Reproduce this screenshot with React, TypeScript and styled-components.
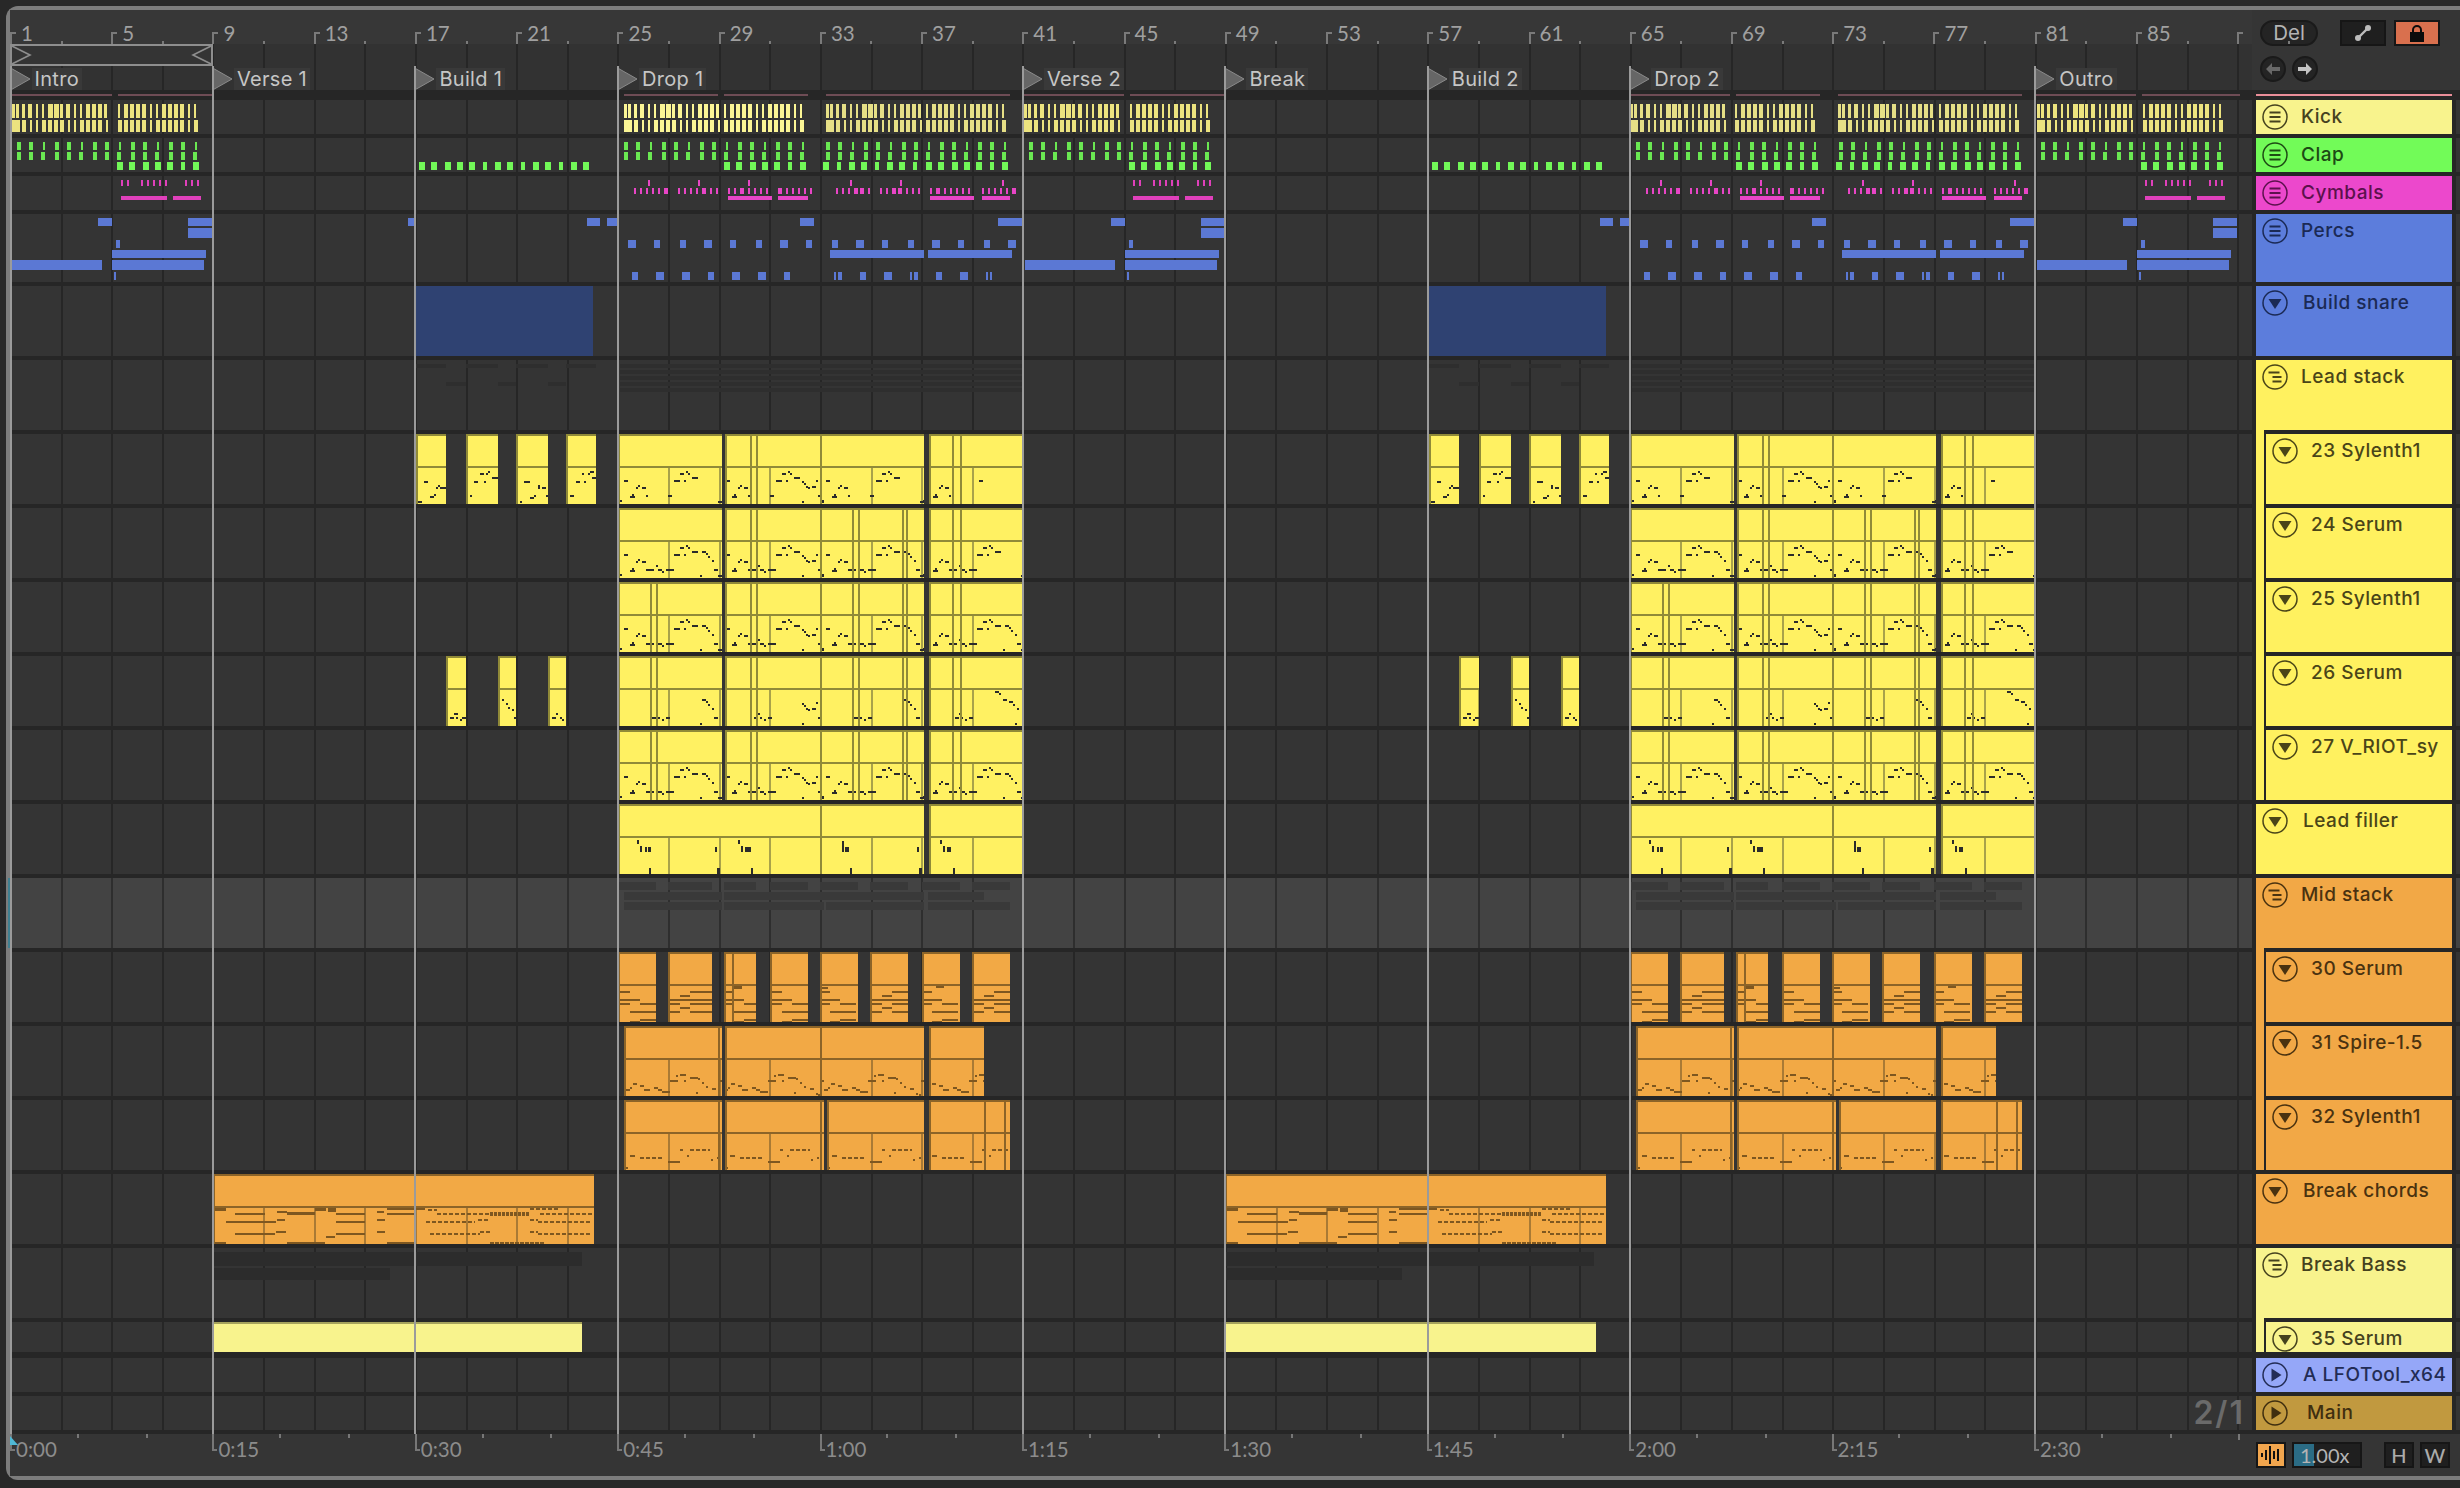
import React from 'react';
import styled, { createGlobalStyle } from 'styled-components';

type Tone = 'yellow' | 'orange';
type Note = [number, number, number, number?];
type Box = [number, number, number, number, string];

const SEAM = '#262626';
const LANE = '#343434';
const barX = (bar: number) => 10.5 + (bar - 1) * 25.31;
const BAR4 = 101.24;
const DROP2 = 1012;
const BUILD2 = 1013;

const tones = {
  yellow: { bg: '#fff162', edge: '#908a38', grid: '#a9a24a', note: '#2b2b2b' },
  orange: { bg: '#f2a945', edge: '#8c6428', grid: '#a97a35', note: '#7e5720' },
};

const GlobalStyle = createGlobalStyle`
  html, body { margin: 0; padding: 0; background: #282828; }
  * { box-sizing: border-box; }
`;

const Page = styled.div`
  width: 2460px;
  height: 1488px;
  padding: 6px 0 0 6px;
  background: #282828;
  overflow: hidden;
`;

const Frame = styled.div`
  position: relative;
  width: 2454px;
  height: 1474px;
  border: 4px solid #7c7c7c;
  border-right: 0;
  border-radius: 12px 0 0 12px;
  background: #353535;
  display: flex;
  flex-direction: column;
  font-family: 'Inter', 'Liberation Sans', sans-serif;
`;

const TopArea = styled.div`
  display: flex;
  height: 80px;
`;

const TopLeft = styled.div`
  width: 2242px;
  display: flex;
  flex-direction: column;
`;

const Ruler = styled.div`
  display: flex;
  height: 34px;
  background: #373737;
`;

const RulerCell = styled.div`
  position: relative;
  flex: 0 0 ${BAR4}px;
  height: 34px;
  padding-left: 11px;
  font-family: 'Lato', 'Liberation Sans', sans-serif;
  font-size: 20.5px;
  line-height: 46px;
  color: #a0a0a0;

  &::before {
    content: '';
    position: absolute;
    left: 0;
    top: 22px;
    width: 4px;
    height: 12px;
    border-left: 2px solid #7a7a7a;
    border-top: 2px solid #7a7a7a;
  }

  &::after {
    content: '';
    position: absolute;
    left: 50%;
    top: 31px;
    width: 2px;
    height: 3px;
    background: #7a7a7a;
  }
`;

const gridLines = (line: string) => `repeating-linear-gradient(90deg, ${line} 0, ${line} 2px, transparent 2px, transparent 50.62px)`;

const LoopLane = styled.div`
  position: relative;
  height: 22px;
  background-color: #323232;
  background-image: ${gridLines(SEAM)};
`;

const LoopBrace = styled.div`
  position: absolute;
  left: 0;
  top: 0;
  width: 203px;
  height: 22px;
  background: #343434;
  border: 2px solid #8e8e8e;
  display: flex;
  justify-content: space-between;
`;

const LocatorLane = styled.div`
  position: relative;
  height: 24px;
  background-color: #323232;
  background-image: ${gridLines(SEAM)};
`;

const Locator = styled.div`
  position: absolute;
  top: 2px;
  display: flex;
  height: 22px;
  align-items: center;
`;

const LocatorName = styled.span`
  margin-left: 1px;
  padding: 0 3px;
  background: #393939;
  color: #c6c6c6;
  font-size: 20px;
  font-weight: 400;
  letter-spacing: 0.3px;
  line-height: 22px;
  white-space: nowrap;
`;

const Controls = styled.div`
  flex: 1;
  padding: 10px 0 0 8px;
  display: flex;
  flex-direction: column;
  gap: 10px;
`;

const ControlRow = styled.div`
  display: flex;
  align-items: center;
  gap: 6px;
`;

const DelButton = styled.div`
  width: 58px;
  height: 26px;
  margin-right: 16px;
  border-radius: 13px;
  background: #242424;
  border: 2px solid #1a1a1a;
  color: #b4b4b4;
  font-size: 20.5px;
  line-height: 22px;
  text-align: center;
`;

const SquareButton = styled.div<{ $bg: string }>`
  width: 46px;
  height: 26px;
  margin-right: 2px;
  background: ${p => p.$bg};
  border: 2px solid #161616;
  display: flex;
  align-items: center;
  justify-content: center;
`;

const RoundButton = styled.div`
  width: 26px;
  height: 26px;
  border-radius: 50%;
  background: #242424;
  border: 2px solid #1a1a1a;
  display: flex;
  align-items: center;
  justify-content: center;
`;

const Band = styled.div`
  display: flex;
  height: 10px;
  background: ${SEAM};
`;

const BandLane = styled.div`
  position: relative;
  width: 2242px;
`;

const BandStrip = styled.div`
  position: absolute;
  top: 4px;
  height: 2px;
  background: #6e4c55;
`;

const BandHeader = styled.div`
  width: 196px;
  height: 2px;
  margin: 4px 0 0 4px;
  background: #e98d98;
`;

const TrackList = styled.div`
  display: flex;
  flex-direction: column;
  gap: 4px;
  padding-bottom: 4px;
  background: ${SEAM};
`;

const TrackRow = styled.div<{ $height: number; $gapAfter?: boolean }>`
  display: flex;
  gap: 4px;
  height: ${p => p.$height}px;
  margin-bottom: ${p => (p.$gapAfter ? 2 : 0)}px;
`;

const Lane = styled.div<{ $group?: boolean }>`
  position: relative;
  flex: 0 0 2242px;
  overflow: ${p => (p.$group ? 'visible' : 'hidden')};
  background-color: ${p => (p.$group ? '#434343' : LANE)};
  background-image: ${p => gridLines(p.$group ? '#2e2e2e' : SEAM)};

  ${p => p.$group && `
    &::before {
      content: '';
      position: absolute;
      left: -2px;
      top: 0;
      bottom: 0;
      width: 2px;
      background: #3f7f90;
    }
  `}
`;

const LaneTail = styled.div<{ $group?: boolean }>`
  flex: 1;
  background: ${p => (p.$group ? '#434343' : LANE)};
`;

const LaneNotes = styled.svg`
  position: absolute;
  left: 0;
  top: 0;
  display: block;
`;

const ClipBox = styled.div<{ $tone: Tone }>`
  position: absolute;
  top: 0;
  bottom: 0;
  overflow: hidden;
  background: ${p => tones[p.$tone].bg};
  border-left: 2px solid ${p => tones[p.$tone].edge};
  border-top: 2px solid ${p => tones[p.$tone].edge};
`;

const ClipHead = styled.div<{ $tone: Tone }>`
  height: 32px;
  border-bottom: 2px solid ${p => tones[p.$tone].edge};
`;

const ClipBody = styled.svg`
  display: block;
`;

const ClipLine = styled.div<{ $tone: Tone }>`
  position: absolute;
  top: 0;
  bottom: 0;
  width: 2px;
  background: ${p => tones[p.$tone].edge};
`;

const SnareClip = styled.div`
  position: absolute;
  top: 0;
  bottom: 0;
  background: #2f4272;
`;

const BassClip = styled.div`
  position: absolute;
  top: 0;
  bottom: 0;
  background: #f8f38d;
  border-top: 2px solid #a5a25c;
`;

const LocatorLayer = styled.div`
  position: absolute;
  left: 0;
  top: 56px;
  height: 1368px;
  width: 2242px;
  pointer-events: none;
`;

const LocatorLine = styled.div`
  position: absolute;
  top: 0;
  bottom: 0;
  width: 2px;
  background: #9b9b9b;
`;

const Header = styled.div<{ $bg: string; $ink: string; $nested?: boolean; $parent?: string }>`
  position: relative;
  flex: 0 0 196px;
  min-width: 0;
  display: flex;
  align-items: flex-start;
  padding: 4px 0 0 ${p => (p.$nested ? 16 : 6)}px;
  background: ${p => p.$bg};
  color: ${p => p.$ink};

  ${p => p.$nested && `
    &::before {
      content: '';
      position: absolute;
      left: 0;
      top: -4px;
      bottom: 0;
      width: 8px;
      background: ${p.$parent};
    }
    &::after {
      content: '';
      position: absolute;
      left: 8px;
      top: -4px;
      bottom: 0;
      width: 2px;
      background: ${SEAM};
    }
  `}
`;

const HeaderIcon = styled.svg`
  flex: 0 0 26px;
  position: relative;
  z-index: 1;
`;

const HeaderName = styled.div<{ $indent: number }>`
  margin-left: ${p => p.$indent}px;
  flex: 1;
  min-width: 0;
  overflow: hidden;
  white-space: nowrap;
  font-size: 19px;
  font-weight: 500;
  letter-spacing: 0.5px;
  line-height: 26px;
`;

const Footer = styled.div`
  display: flex;
  height: 42px;
  background: #353535;
`;

const TimeRuler = styled.div`
  position: relative;
  display: flex;
  width: 2242px;
  overflow: hidden;
`;

const TimeCell = styled.div<{ $plain?: boolean }>`
  position: relative;
  flex: 0 0 202.4px;
  padding-left: 6px;
  font-family: 'Lato', 'Liberation Sans', sans-serif;
  font-size: 20.5px;
  line-height: 30px;
  color: #8c8c8c;

  &::before {
    content: '';
    position: absolute;
    left: ${p => (p.$plain ? 2 : 0)}px;
    top: 0;
    width: 3px;
    height: ${p => (p.$plain ? 6 : 15)}px;
    border-left: 2px solid #777;
    border-bottom: ${p => (p.$plain ? 0 : 2)}px solid #777;
  }
`;

const TimeTick = styled.span<{ $at: number }>`
  position: absolute;
  top: 0;
  left: ${p => p.$at}%;
  width: 2px;
  height: 4px;
  background: #777;
`;

const PlayMark = styled.svg`
  position: absolute;
  left: 0;
  top: 2px;
  z-index: 1;
`;

const FooterRight = styled.div`
  flex: 1;
  display: flex;
  align-items: flex-start;
  padding: 8px 0 0 4px;
`;

const WaveButton = styled.div`
  width: 30px;
  height: 26px;
  background: #f2a64e;
  border: 2px solid #161616;
  display: flex;
  align-items: center;
  justify-content: center;
`;

const ZoomBox = styled.div`
  position: relative;
  width: 70px;
  height: 26px;
  margin: 0 22px 0 6px;
  background: #1f1f1f;
  border: 2px solid #161616;
  color: #b4b4b4;
  font-family: 'Lato', 'Liberation Sans', sans-serif;
  font-size: 20px;
  line-height: 22px;
  padding-left: 6px;
`;

const ZoomFill = styled.div`
  position: absolute;
  left: 0;
  top: 0;
  bottom: 0;
  width: 20px;
  background: #2b6c85;
`;

const ZoomText = styled.span`
  position: relative;
`;

const LetterButton = styled.div`
  width: 30px;
  height: 26px;
  margin-right: 6px;
  background: #1f1f1f;
  border: 2px solid #161616;
  color: #ababab;
  font-family: 'Lato', 'Liberation Sans', sans-serif;
  font-size: 20px;
  font-weight: 500;
  line-height: 22px;
  text-align: center;
`;

const GridLabel = styled.div`
  position: absolute;
  right: 7px;
  top: 0;
  font-size: 32px;
  font-weight: 600;
  letter-spacing: 2px;
  color: #6a6a6a;
  line-height: 34px;
`;

// drawn notes

const Boxes: React.FC<{ height: number; items: Box[] }> = ({ height, items }) => (
  <LaneNotes width={2242} height={height} viewBox={`10 0 2242 ${height}`} shapeRendering="crispEdges">
    {items.map((b, i) => (
      <rect key={i} x={b[0]} y={b[2]} width={b[1] - b[0]} height={b[3]} fill={b[4]} />
    ))}
  </LaneNotes>
);

const place = (runs: number[][], origin: number, y: number, h: number, color: string): Box[] =>
  runs.map(r => [origin + r[0], origin + r[1], y, h, color] as Box);

const KICK_A_TOP = [[0, 3], [4, 7], [10, 13], [16, 20], [24, 26], [30, 32], [36, 41], [42, 47], [48, 51], [54, 58], [62, 64], [68, 70], [74, 78], [80, 84], [86, 90], [92, 95]];
const KICK_A_LOW = [[0, 8], [10, 14], [18, 20], [24, 26], [30, 34], [36, 40], [42, 46], [48, 52], [56, 58], [62, 64], [68, 72], [74, 78], [80, 84], [86, 90], [94, 96]];
const KICK_B_TOP = [[0, 2], [6, 10], [12, 16], [18, 22], [24, 28], [32, 34], [38, 40], [44, 48], [50, 54], [56, 60], [62, 66], [70, 72], [76, 78]];
const KICK_B_LOW = [[0, 4], [6, 10], [12, 16], [18, 22], [24, 28], [32, 34], [38, 42], [44, 48], [50, 54], [56, 60], [62, 66], [70, 72], [76, 80]];

const kickPair = (a: number, b: number, color: string): Box[] => [
  ...place(KICK_A_TOP, a, 4, 14, color),
  ...place(KICK_A_LOW, a, 20, 12, color),
  ...place(KICK_B_TOP, b, 4, 14, color),
  ...place(KICK_B_LOW, b, 20, 12, color),
];

const kickBoxes: Box[] = [
  ...[1, 41, 81].flatMap(bar => kickPair(barX(bar) + 1.5, barX(bar) + 107.5, '#ece37f')),
  ...kickPair(barX(25) + 6, barX(25) + 106, '#fbf595'),
  ...kickPair(barX(33) + 6, barX(33) + 106, '#e6df86'),
  ...kickPair(barX(65), barX(65) + 105, '#e6df86'),
  ...kickPair(barX(73) + 5, barX(73) + 106, '#e6df86'),
];

const CLAP_GREEN = '#6ae852';
const CLAP_ROW1 = [[6, 10], [18, 22], [32, 34], [44, 48], [56, 60], [70, 72], [82, 86], [94, 98], [108, 110], [120, 124], [132, 136], [146, 148], [158, 162], [170, 174], [184, 186]];
const CLAP_ROW2 = [[6, 10], [18, 22], [30, 34], [44, 48], [56, 60], [68, 72], [82, 86], [94, 98], [106, 110], [120, 124], [132, 136], [144, 148], [158, 162], [170, 174], [182, 186]];
const CLAP_ROW3 = [[106, 112], [118, 124], [132, 138], [144, 150], [156, 162], [170, 174], [182, 188]];
const CLAP_ROW3_HEAD = [[3, 9], [17, 21], [29, 35], [41, 47], [55, 59], [67, 73], [79, 85], [93, 97]];
const CLAP_BUILD = [[3, 9], [15, 21], [29, 35], [41, 47], [53, 59], [67, 71], [79, 85], [91, 97], [105, 109], [117, 123], [129, 135], [143, 147], [155, 161], [167, 173]];

const clapSection = (bar: number, head: boolean): Box[] => [
  ...place(CLAP_ROW1, barX(bar), 4, 8, CLAP_GREEN),
  ...place(CLAP_ROW2, barX(bar), 14, 8, CLAP_GREEN),
  ...place(CLAP_ROW3, barX(bar), 24, 8, '#72f858'),
  ...(head ? place(CLAP_ROW3_HEAD, barX(bar), 24, 8, '#72f858') : []),
];

const clapBoxes: Box[] = [
  ...clapSection(1, false), ...clapSection(25, false), ...clapSection(33, true),
  ...clapSection(41, false), ...clapSection(65, false), ...clapSection(73, true), ...clapSection(81, false),
  ...place(CLAP_BUILD, 415.5, 24, 8, '#72f858'),
  ...place(CLAP_BUILD, 415.5 + BUILD2, 24, 8, '#72f858'),
];

const PINK = '#e040bb';
const cymTicks = (runs: number[][]) => runs.map(r => [r[0] / 3, r[1] / 3]);
const CYM_SPARSE = [[110, 112], [116, 118], [130, 132], [136, 138], [142, 144], [148, 150], [154, 156], [174, 176], [180, 182], [186, 188]];
const CYM_SPARSE_LONG = [[110, 156], [162, 190]];
const CYM_TOP = cymTicks([[144, 150], [294, 300], [444, 450], [750, 756], [900, 906], [1206, 1212]]);
const CYM_MID = cymTicks([[102, 108], [120, 126], [138, 144], [156, 162], [174, 180], [192, 204], [234, 240], [252, 258], [270, 276], [288, 294], [306, 318], [330, 336], [348, 354], [384, 390], [402, 408], [420, 432], [444, 450], [462, 468], [480, 486], [498, 504], [534, 546], [558, 564], [576, 582], [594, 600], [612, 618], [630, 636], [708, 714], [726, 732], [744, 750], [762, 774], [780, 792], [804, 810], [840, 846], [858, 864], [876, 888], [894, 906], [918, 924], [936, 942], [954, 960], [990, 996], [1008, 1020], [1032, 1038], [1050, 1056], [1068, 1074], [1086, 1092], [1104, 1110], [1146, 1152], [1164, 1170], [1182, 1188], [1200, 1206], [1218, 1224], [1236, 1248]]);
const CYM_LONG = cymTicks([[384, 516], [534, 624], [990, 1122], [1146, 1230]]);

const cymbalBoxes: Box[] = [
  ...[1, 41, 81].flatMap(bar => [
    ...place(CYM_SPARSE, barX(bar), 4, 6, PINK),
    ...place(CYM_SPARSE_LONG, barX(bar), 20, 4, PINK),
  ]),
  ...[600, 600 + DROP2].flatMap(o => [
    ...place(CYM_TOP, o, 4, 6, '#e845c6'),
    ...place(CYM_MID, o, 12, 6, '#e845c6'),
    ...place(CYM_LONG, o, 20, 4, '#e845c6'),
  ]),
];

const BLUE = '#5b78d4';
const PERC_C = cymTicks([[84, 108], [162, 180], [240, 258], [312, 336], [390, 408], [468, 486], [540, 564], [618, 636], [696, 714], [768, 792], [846, 864], [924, 942], [996, 1020], [1074, 1092], [1152, 1170], [1224, 1248]]);
const PERC_F = cymTicks([[96, 114], [168, 192], [246, 270], [324, 342], [396, 420], [474, 498], [552, 570], [702, 708], [714, 726], [780, 798], [852, 876], [930, 936], [942, 954], [1008, 1026], [1080, 1104], [1158, 1164], [1170, 1176]]);
const PERC_D = cymTicks([[690, 972], [984, 1236]]);
const PERC_A = cymTicks([[600, 642], [1194, 1266]]);

const percSparse = (x: number): Box[] => [
  [x + 88, x + 102, 4, 8, BLUE],
  [x + 178, x + 202, 4, 8, BLUE],
  [x + 178, x + 202, 14, 10, BLUE],
  [x + 106, x + 110, 26, 8, BLUE],
  [x + 102, x + 196, 36, 8, BLUE],
  [x + 2, x + 92, 46, 10, BLUE],
  [x + 102, x + 194, 46, 10, BLUE],
  [x + 104, x + 106, 58, 8, BLUE],
];

const percBuild = (x: number): Box[] => [
  [x + 171, x + 184, 4, 8, BLUE],
  [x + 191, x + 202, 4, 8, BLUE],
];

const percBoxes: Box[] = [
  ...percSparse(10), ...percSparse(barX(41)), ...percSparse(barX(81)),
  [408, 414, 4, 8, BLUE],
  ...percBuild(415.5), ...percBuild(415.5 + BUILD2),
  ...[600, 600 + DROP2].flatMap(o => [
    ...place(PERC_A, o, 4, 8, BLUE),
    ...place(PERC_C, o, 26, 8, BLUE),
    ...place(PERC_D, o, 36, 8, BLUE),
    ...place(PERC_F, o, 58, 8, BLUE),
  ]),
];

// lead motif, x from the start of each four bars, y from the top of the note area
const M: Note[] = [[0, 32, 2], [4, 12, 4], [10, 28, 5], [12, 26, 2], [16, 19, 2], [18, 17, 2], [22, 19, 4], [26, 27, 2], [48, 27, 4], [54, 12, 6], [60, 5, 4], [66, 3, 2], [68, 5, 2], [64, 12, 2], [72, 9, 6], [98, 33, 4]];
const E1: Note[] = [[26, 27, 8], [36, 23, 2], [38, 27, 4], [42, 29, 2], [46, 27, 8]];
const E1S: Note[] = [[32, 27, 4], [36, 23, 2], [38, 27, 2], [42, 29, 2], [46, 27, 4]];
const E2: Note[] = [[82, 9, 4], [86, 11, 2], [88, 14, 2], [92, 18, 2], [94, 27, 4], [80, 33, 2]];
const E2B: Note[] = [[80, 13, 2], [82, 15, 2], [84, 18, 2], [86, 19, 2], [90, 18, 4], [94, 12, 2], [80, 33, 2], [96, 27, 4]];
const E2C: Note[] = [[72, 1, 4], [76, 3, 2], [80, 9, 4], [86, 11, 4], [90, 14, 2], [94, 18, 2], [92, 33, 2]];
const LEAD_ORIGINS = [620, 722, 822, 923];

const leadPeriods: Note[][][] = [
  [M, [...M, ...E2B], M, [...M.filter(n => n[0] < 40), [56, 12, 4]]],
  [[...M, ...E1, ...E2], [...M, ...E1, ...E2B], [...M, ...E1, ...E2], [...M, ...E1]],
  [[...M, ...E1, ...E2], [...M, ...E1, ...E2B], [...M, ...E1, ...E2], [...M, ...E1, ...E2]],
  [[...E1S, ...E2], [...E1S, ...E2B], [...E1S, ...E2], [...E1S, ...E2C]],
  [[...M, ...E1, ...E2], [...M, ...E1, ...E2B], [...M, ...E1, ...E2], [...M, ...E1, ...E2]],
];

const leadLines: number[][] = [
  [750, 756, 820, 952, 960],
  [750, 756, 820, 852, 858, 902, 906, 952, 960],
  [650, 656, 750, 756, 820, 852, 858, 902, 906, 952, 960],
  [650, 656, 750, 756, 820, 852, 858, 902, 906, 952, 960],
  [650, 656, 750, 756, 820, 852, 858, 902, 906, 952, 960],
];

const shift = (notes: Note[], x: number): Note[] => notes.map(n => [n[0] + x, n[1], n[2], n[3]]);

const Clip: React.FC<{ x0: number; x1: number; tone: Tone; notes?: Note[]; lines?: number[] }> = ({ x0, x1, tone, notes = [], lines = [] }) => {
  const inner = x1 - x0 - 2;
  const grid: number[] = [];
  for (let k = 0; k < 50; k++) {
    const gx = 10 + k * 50.62;
    if (gx > x0 + 2 && gx < x1) grid.push(gx);
  }
  return (
    <ClipBox $tone={tone} style={{ left: x0 - 10, width: x1 - x0 }}>
      <ClipHead $tone={tone} />
      <ClipBody width={inner} height={36} viewBox={`${x0 + 2} 0 ${inner} 36`} shapeRendering="crispEdges">
        {grid.map(g => (
          <rect key={g} x={g} y={0} width={2} height={36} fill={tones[tone].grid} />
        ))}
        {notes.map((n, i) => (
          <rect key={i} x={n[0]} y={n[1]} width={n[2]} height={n[3] ?? 2} fill={tones[tone].note} />
        ))}
      </ClipBody>
      {lines.filter(l => l > x0 && l < x1).map(l => (
        <ClipLine key={l} $tone={tone} style={{ left: l - x0 - 2 }} />
      ))}
    </ClipBox>
  );
};

const BUILD_TOP: { x0: number; x1: number; notes: Note[] }[] = [
  { x0: 416, x1: 446, notes: [[0, 33, 4], [6, 13, 4], [12, 28, 4], [16, 26, 2], [18, 19, 2], [20, 17, 2], [22, 19, 6], [28, 27, 2]] },
  { x0: 466, x1: 498, notes: [[2, 27, 2], [6, 13, 4], [12, 5, 4], [16, 13, 2], [18, 5, 2], [20, 3, 2], [24, 9, 6]] },
  { x0: 516, x1: 548, notes: [[2, 33, 2], [6, 13, 6], [12, 29, 4], [16, 27, 2], [20, 17, 2, 4], [24, 19, 4], [28, 27, 2]] },
  { x0: 566, x1: 596, notes: [[2, 27, 4], [8, 13, 4], [14, 5, 2], [16, 13, 2], [20, 5, 2], [22, 3, 4], [24, 9, 6]] },
];

const BUILD_LOW: { x0: number; x1: number; notes: Note[] }[] = [
  { x0: 446, x1: 466, notes: [[2, 27, 4], [6, 23, 4], [8, 27, 2], [12, 29, 2], [14, 27, 4]] },
  { x0: 498, x1: 516, notes: [[2, 9, 2], [6, 13, 2], [8, 17, 2], [12, 19, 2], [14, 27, 4]] },
  { x0: 548, x1: 566, notes: [[2, 27, 4], [6, 23, 2], [10, 27, 2], [12, 29, 2], [16, 27, 2]] },
];

const buildClips = (set: { x0: number; x1: number; notes: Note[] }[]) =>
  [0, BUILD2].flatMap(o =>
    set.map(c => <Clip key={`${o}-${c.x0}`} x0={c.x0 + o} x1={c.x1 + o} tone="yellow" notes={shift(c.notes, c.x0 + o + 2)} />),
  );

const leadClips = (row: number) => {
  const notes = (o: number) =>
    leadPeriods[row].flatMap((period, p) => shift(period, LEAD_ORIGINS[p] + o));
  return [0, DROP2].flatMap(o =>
    [[618, 722], [725, 924], [929, 1022]].map(([a, b]) => (
      <Clip key={`${o}-${a}`} x0={a + o} x1={b + o} tone="yellow" notes={notes(o)} lines={leadLines[row].map(l => l + o)} />
    )),
  );
};

const FILLER: Note[] = [
  [17, 2, 2, 4], [20, 8, 2, 6], [25, 9, 2, 5], [28, 9, 3, 5], [29, 30, 2, 6], [95, 9, 2, 5], [97, 30, 3, 6],
  [118, 2, 2, 4], [121, 8, 2, 6], [125, 9, 6, 5], [131, 30, 2, 6],
  [222, 3, 2, 11], [225, 9, 4, 5], [230, 30, 2, 6], [297, 9, 2, 5], [299, 30, 3, 6],
  [320, 2, 2, 4], [323, 8, 2, 6], [327, 9, 4, 5], [333, 30, 2, 6],
];

const fillerClips = [0, DROP2].flatMap(o =>
  [[618, 924], [929, 1022]].map(([a, b]) => (
    <Clip key={`${o}-${a}`} x0={a + o} x1={b + o} tone="yellow" notes={shift(FILLER, 620 + o)} lines={[820 + o]} />
  )),
);

const STAB_A: Note[] = [[0, 5, 10], [0, 13, 20], [0, 17, 10], [20, 17, 16], [10, 25, 26], [20, 33, 16], [10, 35, 10]];
const STAB_B: Note[] = [[22, 5, 22], [12, 9, 10], [2, 13, 42], [2, 17, 10], [22, 17, 22], [12, 21, 10], [2, 25, 10], [22, 25, 22]];
const STAB_AT: [number, number, Note[], number[]][] = [
  [618, 656, shift(STAB_A, 2), []],
  [668, 712, STAB_B, []],
  [724, 756, [...STAB_A, [10, 0, 8, 3]], [732]],
  [770, 808, shift(STAB_A, 2), []],
  [820, 858, [...STAB_A, [0, 1, 8, 2]], []],
  [870, 908, STAB_B, []],
  [922, 960, [...STAB_A, [14, 0, 8, 2]], []],
  [972, 1010, STAB_B, []],
];

const stabClips = [0, DROP2].flatMap(o =>
  STAB_AT.map(([a, b, notes, lines]) => (
    <Clip key={`${o}-${a}`} x0={a + o} x1={b + o} tone="orange" notes={shift(notes, a + o)} lines={lines.map(l => l + o)} />
  )),
);

const SPIRE: Note[] = [[0, 34, 2], [2, 20, 4], [6, 29, 4], [10, 27, 2], [13, 23, 4], [20, 25, 4], [24, 29, 6], [34, 27, 4], [38, 29, 4], [42, 31, 8], [50, 20, 8], [56, 15, 2], [60, 14, 6], [64, 20, 2], [70, 17, 8], [78, 18, 2], [82, 22, 2], [86, 26, 2], [76, 32, 2], [92, 28, 4], [98, 33, 2]];

const spireClips = [0, DROP2].flatMap(o => {
  const notes = [624, 722, 822, 923].flatMap(x => shift(SPIRE, x + o - 4));
  return [[624, 722, [718]], [725, 924, [820]], [929, 984, []]].map(([a, b, lines]) => (
    <Clip key={`${o}-${a as number}`} x0={(a as number) + o} x1={(b as number) + o} tone="orange" notes={notes} lines={(lines as number[]).map(l => l + o)} />
  ));
});

const dashes = (x0: number, x1: number, y: number, step = 6, w = 4, h = 2): Note[] => {
  const out: Note[] = [];
  for (let x = x0; x < x1; x += step) out.push([x, y, Math.min(w, x1 - x), h]);
  return out;
};

const SYNTH: Note[] = [[6, 21, 5], ...dashes(16, 40, 23), [44, 27, 12], [56, 15, 3], ...dashes(66, 86, 15), [63, 21, 2], [87, 25, 2], [93, 23, 2], [2, 33, 2]];

const synthClips = [0, DROP2].flatMap(o => {
  const notes = [624, 724, 826, 926].flatMap(x => shift(SYNTH, x + o));
  return [[624, 722, [718]], [725, 824, [820]], [827, 924, []], [929, 1010, [984, 1004]]].map(([a, b, lines]) => (
    <Clip key={`${o}-${a as number}`} x0={(a as number) + o} x1={(b as number) + o} tone="orange" notes={notes} lines={(lines as number[]).map(l => l + o)} />
  ));
});

const CHORDS: Note[] = [
  [213, 0, 13, 3], [235, 5, 30], [277, 3, 10], [287, 4, 28, 3], [315, 0, 11, 3], [328, 0, 8, 4], [336, 5, 29], [377, 3, 7], [387, 0, 28, 2], [387, 5, 28],
  [226, 13, 50], [277, 11, 8], [336, 13, 29], [377, 11, 8],
  [235, 25, 40], [276, 23, 10], [336, 25, 29], [377, 23, 8],
  [213, 34, 13], [287, 34, 38], [326, 28, 9], [387, 34, 28],
  ...dashes(415, 425, 0, 3, 3), ...dashes(428, 437, 1),
  ...dashes(437, 490, 5), ...dashes(490, 530, 4, 4, 3, 4), ...dashes(530, 560, 0, 6, 4),
  ...dashes(540, 594, 5),
  ...dashes(426, 475, 13), ...dashes(478, 490, 11), ...dashes(530, 538, 11), ...dashes(538, 590, 13),
  ...dashes(430, 480, 25), ...dashes(480, 490, 23), ...dashes(530, 538, 23), ...dashes(538, 590, 25),
  ...dashes(490, 545, 34, 5, 4),
];

const chordClips = [0, 1012].map(o => (
  <Clip key={o} x0={213 + o} x1={594 + o} tone="orange" notes={shift(CHORDS, o)} />
));

const OVER = '#2e2e2e';
const leadStackBoxes: Box[] = [0, DROP2].flatMap(o =>
  [4, 10, 16, 22, 28].map(y => [620 + o, 1022 + o, y, 4, OVER] as Box),
).concat([0, BUILD2].flatMap(o => [
  ...[[416, 446], [466, 498], [516, 548], [566, 596]].map(([a, b]) => [a + o, b + o, 4, 4, OVER] as Box),
  ...[[446, 466], [498, 516], [548, 566]].map(([a, b]) => [a + o, b + o, 22, 4, OVER] as Box),
]));

const MID_OVER = '#393939';
const midStackBoxes: Box[] = [0, DROP2].flatMap(o => [
  ...STAB_AT.map(([a, b]) => [a + o, b + o, 4, 8, MID_OVER] as Box),
  ...[[624, 722], [724, 924], [928, 984]].map(([a, b]) => [a + o, b + o, 14, 8, MID_OVER] as Box),
  ...[[624, 722], [724, 824], [826, 924], [928, 1010]].map(([a, b]) => [a + o, b + o, 24, 8, MID_OVER] as Box),
]);

const bassBoxes: Box[] = [0, 1012].flatMap(o => [
  [213 + o, 582 + o, 4, 14, '#2c2c2c'] as Box,
  [213 + o, 390 + o, 20, 12, '#2c2c2c'] as Box,
]);

// icons

type IconKind = 'group' | 'tree' | 'down' | 'right';

const TrackIcon: React.FC<{ kind: IconKind }> = ({ kind }) => (
  <HeaderIcon width={26} height={26} viewBox="0 0 26 26">
    <circle cx={13} cy={13} r={12} fill="none" stroke="currentColor" strokeWidth={1.5} />
    {kind === 'group' && <path d="M7.5 8.5h11M7.5 13h11M7.5 17.5h11" stroke="currentColor" strokeWidth={2} fill="none" />}
    {kind === 'tree' && <path d="M6.5 8.5h11M10.5 13h9M10.5 17.5h9" stroke="currentColor" strokeWidth={2} fill="none" />}
    {kind === 'down' && <path d="M6.5 9h13L13 19z" fill="currentColor" />}
    {kind === 'right' && <path d="M9.5 6.5L19.5 13 9.5 19.5z" fill="currentColor" />}
  </HeaderIcon>
);

const tracks: {
  name: string; bg: string; ink: string; icon: IconKind; height: number; indent: number;
  nested?: boolean; parent?: string; gapAfter?: boolean; group?: boolean;
  content?: React.ReactNode;
}[] = [
  { name: 'Kick', bg: '#f8f38d', ink: '#45421e', icon: 'group', height: 34, indent: 13, content: <Boxes height={34} items={kickBoxes} /> },
  { name: 'Clap', bg: '#72fb58', ink: '#1d4a14', icon: 'group', height: 34, indent: 13, content: <Boxes height={34} items={clapBoxes} /> },
  { name: 'Cymbals', bg: '#ec48cc', ink: '#5c114d', icon: 'group', height: 34, indent: 13, content: <Boxes height={34} items={cymbalBoxes} /> },
  { name: 'Percs', bg: '#5c7ddc', ink: '#1b2a55', icon: 'group', height: 68, indent: 13, content: <Boxes height={68} items={percBoxes} /> },
  {
    name: 'Build snare', bg: '#5c7ddc', ink: '#1b2a55', icon: 'down', height: 70, indent: 15,
    content: [415.5, 415.5 + BUILD2].map(x => <SnareClip key={x} style={{ left: x - 10, width: 177 }} />),
  },
  { name: 'Lead stack', bg: '#fff15f', ink: '#4a4518', icon: 'tree', height: 70, indent: 13, content: <Boxes height={70} items={leadStackBoxes} /> },
  { name: '23 Sylenth1', bg: '#fff15f', ink: '#4a4518', icon: 'down', height: 70, indent: 13, nested: true, parent: '#fff15f', content: [...leadClips(0), ...buildClips(BUILD_TOP)] },
  { name: '24 Serum', bg: '#fff15f', ink: '#4a4518', icon: 'down', height: 70, indent: 13, nested: true, parent: '#fff15f', content: leadClips(1) },
  { name: '25 Sylenth1', bg: '#fff15f', ink: '#4a4518', icon: 'down', height: 70, indent: 13, nested: true, parent: '#fff15f', content: leadClips(2) },
  { name: '26 Serum', bg: '#fff15f', ink: '#4a4518', icon: 'down', height: 70, indent: 13, nested: true, parent: '#fff15f', content: [...leadClips(3), ...buildClips(BUILD_LOW)] },
  { name: '27 V_RIOT_sy', bg: '#fff15f', ink: '#4a4518', icon: 'down', height: 70, indent: 13, nested: true, parent: '#fff15f', content: leadClips(4) },
  { name: 'Lead filler', bg: '#fff15f', ink: '#4a4518', icon: 'down', height: 70, indent: 15, content: fillerClips },
  { name: 'Mid stack', bg: '#f2a846', ink: '#4a3210', icon: 'tree', height: 70, indent: 13, group: true, content: <Boxes height={70} items={midStackBoxes} /> },
  { name: '30 Serum', bg: '#f2a846', ink: '#4a3210', icon: 'down', height: 70, indent: 13, nested: true, parent: '#f2a846', content: stabClips },
  { name: '31 Spire-1.5', bg: '#f2a846', ink: '#4a3210', icon: 'down', height: 70, indent: 13, nested: true, parent: '#f2a846', content: spireClips },
  { name: '32 Sylenth1', bg: '#f2a846', ink: '#4a3210', icon: 'down', height: 70, indent: 13, nested: true, parent: '#f2a846', content: synthClips },
  { name: 'Break chords', bg: '#f2a846', ink: '#4a3210', icon: 'down', height: 70, indent: 15, content: chordClips },
  { name: 'Break Bass', bg: '#f8f38d', ink: '#45421e', icon: 'tree', height: 70, indent: 13, content: <Boxes height={70} items={bassBoxes} /> },
  {
    name: '35 Serum', bg: '#f8f38d', ink: '#45421e', icon: 'down', height: 30, indent: 13, nested: true, parent: '#f8f38d', gapAfter: true,
    content: [[213, 369], [1225, 371]].map(([x, w]) => <BassClip key={x} style={{ left: x - 10, width: w }} />),
  },
  { name: 'A LFOTool_x64', bg: '#95a7f8', ink: '#232c55', icon: 'right', height: 34, indent: 15 },
  { name: 'Main', bg: '#c1993f', ink: '#3f2e0f', icon: 'right', height: 34, indent: 19, content: <GridLabel>2/1</GridLabel> },
];

const locators: [number, string][] = [
  [1, 'Intro'], [9, 'Verse 1'], [17, 'Build 1'], [25, 'Drop 1'], [41, 'Verse 2'],
  [49, 'Break'], [57, 'Build 2'], [65, 'Drop 2'], [81, 'Outro'],
];

const bandRuns: [number, number][] = [
  [12, 112], [118, 213], [624, 718], [724, 808], [826, 1010], [1024, 1124], [1130, 1225],
  [1630, 1730], [1736, 1820], [1838, 2022], [2036, 2136], [2142, 2240],
];

const rulerBars = Array.from({ length: 23 }, (_, i) => 1 + i * 4);
const times = ['0:00', '0:15', '0:30', '0:45', '1:00', '1:15', '1:30', '1:45', '2:00', '2:15', '2:30', ''];

const App: React.FC = () => (
  <Page>
    <GlobalStyle />
    <Frame>
      <TopArea>
        <TopLeft>
          <Ruler>
            {rulerBars.map(bar => (
              <RulerCell key={bar}>{bar <= 85 ? bar : ''}</RulerCell>
            ))}
          </Ruler>
          <LoopLane>
            <LoopBrace>
              <svg width={20} height={18} viewBox="0 0 20 18">
                <path d="M0 0L18 9 0 18" fill="none" stroke="#8e8e8e" strokeWidth={1.6} />
              </svg>
              <svg width={20} height={18} viewBox="0 0 20 18">
                <path d="M20 0L2 9 20 18" fill="none" stroke="#8e8e8e" strokeWidth={1.6} />
              </svg>
            </LoopBrace>
          </LoopLane>
          <LocatorLane>
            {locators.map(([bar, name]) => (
              <Locator key={name} style={{ left: barX(bar) - 10 }}>
                <svg width={20} height={22} viewBox="0 0 20 22">
                  <path d="M0.5 0.5L19 11 0.5 21.5z" fill="#666" stroke="#8a8a8a" strokeWidth={1} />
                </svg>
                <LocatorName>{name}</LocatorName>
              </Locator>
            ))}
          </LocatorLane>
        </TopLeft>
        <Controls>
          <ControlRow>
            <DelButton>Del</DelButton>
            <SquareButton $bg="#1f1f1f">
              <svg width={18} height={18} viewBox="0 0 18 18">
                <path d="M4.5 13.5L13.5 4.5" stroke="#bdbdbd" strokeWidth={2.4} />
                <circle cx={4} cy={14} r={3} fill="#bdbdbd" />
                <circle cx={14} cy={4} r={3} fill="#bdbdbd" />
              </svg>
            </SquareButton>
            <SquareButton $bg="#d9704e">
              <svg width={16} height={18} viewBox="0 0 16 18">
                <path d="M4 8V6a4 4 0 0 1 8 0v2" fill="none" stroke="#0c0c0c" strokeWidth={2} />
                <rect x={1} y={8} width={14} height={10} fill="#0c0c0c" />
              </svg>
            </SquareButton>
          </ControlRow>
          <ControlRow>
            <RoundButton>
              <svg width={16} height={14} viewBox="0 0 16 14">
                <path d="M7 1L1 7l6 6V9h8V5H7z" fill="#686868" />
              </svg>
            </RoundButton>
            <RoundButton>
              <svg width={16} height={14} viewBox="0 0 16 14">
                <path d="M9 1l6 6-6 6V9H1V5h8z" fill="#c4c4c4" />
              </svg>
            </RoundButton>
          </ControlRow>
        </Controls>
      </TopArea>

      <Band>
        <BandLane>
          {bandRuns.map(([a, b]) => (
            <BandStrip key={a} style={{ left: a - 10, width: b - a }} />
          ))}
        </BandLane>
        <BandHeader />
      </Band>

      <TrackList>
        {tracks.map(track => (
          <TrackRow key={track.name} $height={track.height} $gapAfter={track.gapAfter}>
            <Lane $group={track.group}>{track.content}</Lane>
            <Header $bg={track.bg} $ink={track.ink} $nested={track.nested} $parent={track.parent}>
              <TrackIcon kind={track.icon} />
              <HeaderName $indent={track.indent}>{track.name}</HeaderName>
            </Header>
            <LaneTail $group={track.group} />
          </TrackRow>
        ))}
      </TrackList>

      <Footer>
        <TimeRuler>
          <PlayMark width={10} height={10} viewBox="0 0 10 10">
            <path d="M0 0L8 9H0z" fill="#4fb9d6" />
          </PlayMark>
          {times.map((t, i) => (
            <TimeCell key={i} $plain={t === ''}>
              <TimeTick $at={33} />
              <TimeTick $at={67} />
              {t}
            </TimeCell>
          ))}
        </TimeRuler>
        <FooterRight>
          <WaveButton>
            <svg width={22} height={18} viewBox="0 0 22 18">
              <path d="M2 7v4M6 4v10M10 0v18M14 5v8M18 3v12" stroke="#111" strokeWidth={2} />
            </svg>
          </WaveButton>
          <ZoomBox>
            <ZoomFill />
            <ZoomText>1.00x</ZoomText>
          </ZoomBox>
          <LetterButton>H</LetterButton>
          <LetterButton>W</LetterButton>
        </FooterRight>
      </Footer>

      <LocatorLayer>
        {locators.map(([bar]) => (
          <LocatorLine key={bar} style={{ left: barX(bar) - 11 }} />
        ))}
      </LocatorLayer>
    </Frame>
  </Page>
);

export default App;
